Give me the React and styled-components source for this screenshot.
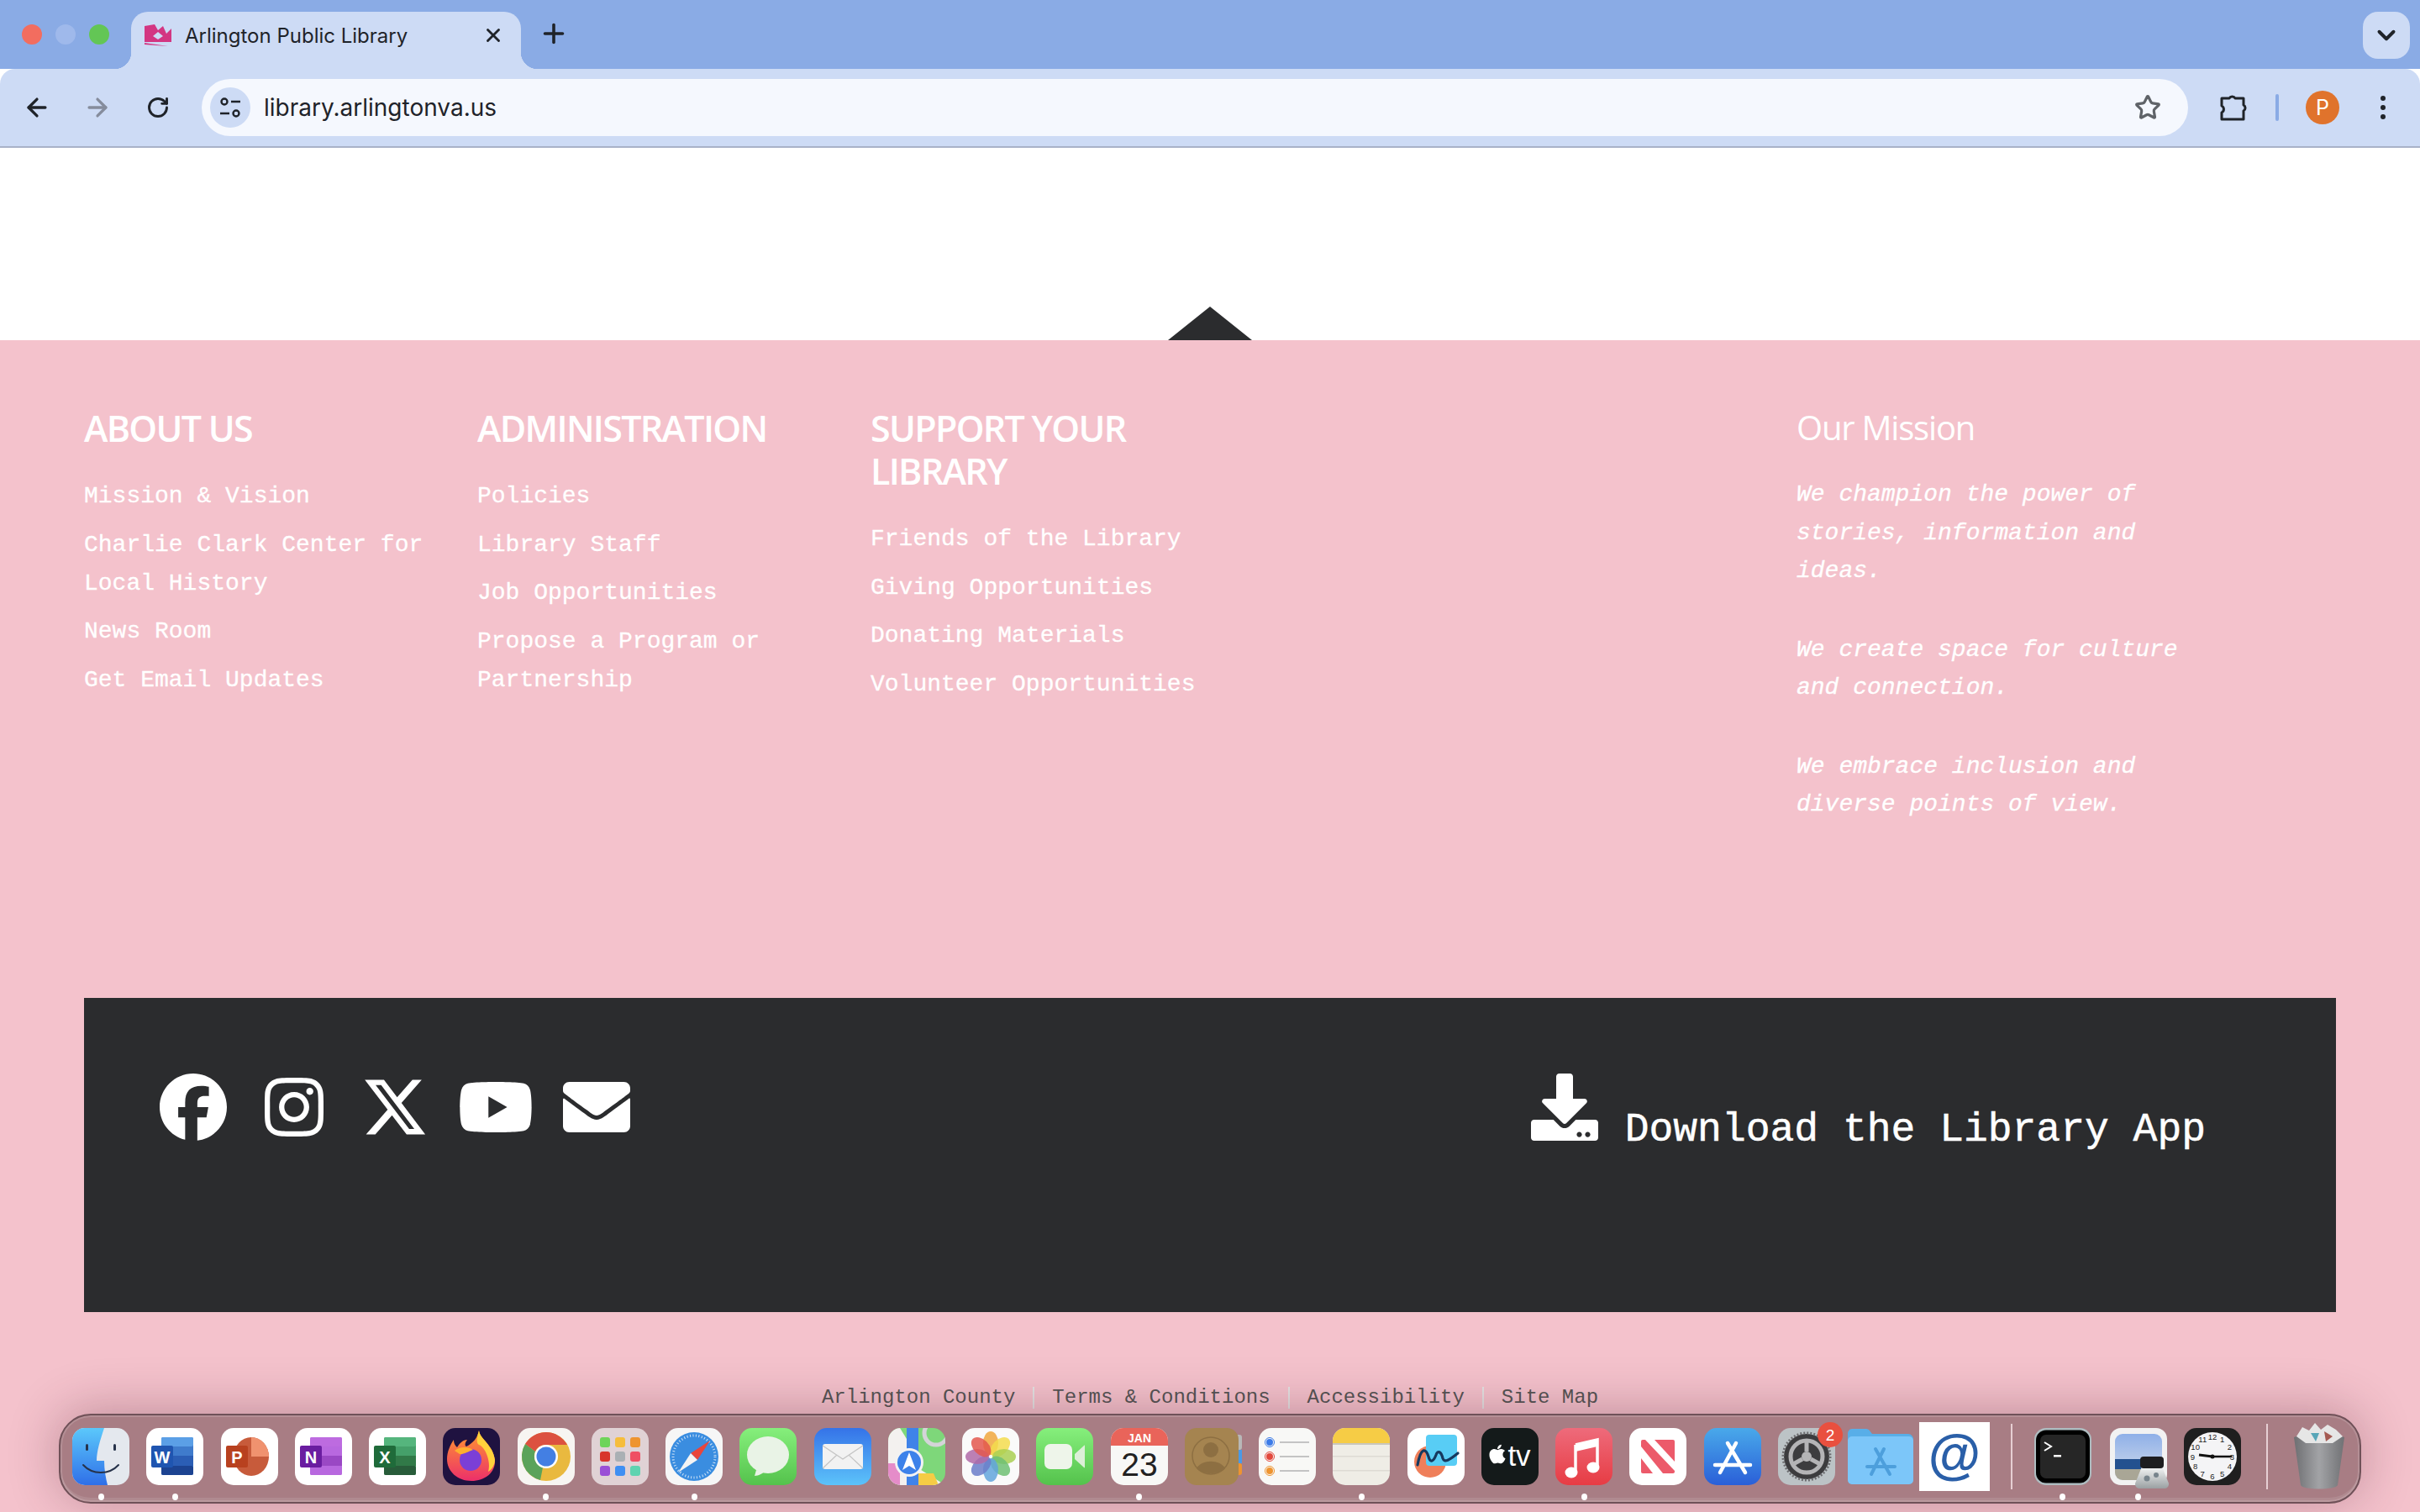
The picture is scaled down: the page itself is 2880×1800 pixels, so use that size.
import React from 'react'
import styled, { createGlobalStyle } from 'styled-components'
import { ArrowLeft, ArrowRight, RotateCw, X, Plus, ChevronDown, Star } from 'lucide-react'
import { FaFacebook, FaInstagram, FaXTwitter, FaYoutube, FaApple } from 'react-icons/fa6'
import { FaDownload, FaEnvelope } from 'react-icons/fa'

const GlobalStyle = createGlobalStyle`
  html, body { margin: 0; padding: 0; background: #fff; }
  * { box-sizing: border-box; }
`

const mono = `"Liberation Mono", "DejaVu Sans Mono", monospace`
const ui = `Inter, Roboto, "Liberation Sans", sans-serif`
const head = `"Open Sans", "Noto Sans", sans-serif`

const Page = styled.div`
  position: relative;
  width: 2880px;
  height: 1800px;
  overflow: hidden;
  background: #fff;
`

/* browser chrome */
const TabStrip = styled.div`
  display: flex;
  align-items: flex-end;
  height: 82px;
  background: #8aabe5;
  padding-left: 26px;
`
const Lights = styled.div`
  display: flex;
  gap: 16px;
  align-self: flex-start;
  margin-top: 29px;
  margin-right: 26px;
`
const Light = styled.span`
  width: 24px;
  height: 24px;
  border-radius: 50%;
  background: ${p => p.$color};
`
const Tab = styled.div`
  position: relative;
  display: flex;
  align-items: center;
  width: 464px;
  height: 68px;
  padding: 0 20px 12px 16px;
  background: #cddbf5;
  border-radius: 20px 20px 0 0;
  color: #1f2329;
  font: 400 24px ${ui};
  &::before, &::after {
    content: '';
    position: absolute;
    bottom: 0;
    width: 20px;
    height: 20px;
  }
  &::before {
    left: -20px;
    background: radial-gradient(circle at 0 0, transparent 20px, #cddbf5 20.5px);
  }
  &::after {
    right: -20px;
    background: radial-gradient(circle at 100% 0, transparent 20px, #cddbf5 20.5px);
  }
`
const TabTitle = styled.span`
  flex: 1;
  margin-left: 16px;
`
const NewTab = styled.div`
  display: flex;
  align-self: flex-start;
  margin: 22px 0 0 21px;
  color: #1f2329;
`
const TabMenu = styled.div`
  display: flex;
  align-items: center;
  justify-content: center;
  align-self: flex-start;
  width: 56px;
  height: 56px;
  margin: 14px 12px 0 auto;
  border-radius: 18px;
  background: #cddbf5;
  color: #1f2329;
`
const Toolbar = styled.div`
  display: flex;
  align-items: center;
  height: 94px;
  padding: 0 24px 0 8px;
  background: #cddbf5;
  border-radius: 18px 18px 0 0;
  border-bottom: 2px solid #a8b2c8;
`
const ToolSlot = styled.div`
  display: flex;
  align-items: center;
  justify-content: center;
  width: ${p => p.$w}px;
  padding-left: ${p => p.$nudge || 0}px;
  color: ${p => p.$color || '#1f2329'};
`
const AddressBar = styled.div`
  display: flex;
  align-items: center;
  flex: 1;
  height: 68px;
  margin-left: 16px;
  padding: 0 32px 0 10px;
  border-radius: 34px;
  background: #f5f8fe;
  color: #1f2329;
  font: 400 28px ${ui};
`
const SiteChip = styled.div`
  display: flex;
  align-items: center;
  justify-content: center;
  width: 48px;
  height: 48px;
  margin-right: 16px;
  border-radius: 50%;
  background: #cddbf5;
`
const Url = styled.span`
  flex: 1;
`
const BarDivider = styled.span`
  width: 4px;
  height: 32px;
  border-radius: 2px;
  background: #8aabe5;
`
const Avatar = styled.div`
  display: flex;
  align-items: center;
  justify-content: center;
  width: 40px;
  height: 40px;
  border-radius: 50%;
  background: #e0732c;
  color: #fff;
  font: 400 25px ${ui};
`
const Kebab = styled.div`
  display: flex;
  flex-direction: column;
  gap: 5px;
  span {
    width: 6px;
    height: 6px;
    border-radius: 50%;
    background: #1f2329;
  }
`

/* page */
const WhiteBand = styled.div`
  display: flex;
  align-items: flex-end;
  justify-content: center;
  height: 229px;
`
const Notch = styled.div`
  width: 0;
  height: 0;
  border-left: 50px solid transparent;
  border-right: 50px solid transparent;
  border-bottom: 40px solid #2b2c2e;
`
const Footer = styled.footer`
  height: 1395px;
  background: #f4c2cc;
  padding: 0 100px;
`
const Columns = styled.div`
  display: flex;
  height: 783px;
  padding-top: 79px;
`
const Column = styled.div`
  width: 468px;
  padding-right: 28px;
`
const Heading = styled.h3`
  margin: 0 0 33px;
  color: #fff;
  font: 600 43px/51px ${head};
  letter-spacing: -1.7px;
`
const LinkList = styled.ul`
  display: flex;
  flex-direction: column;
  gap: 11.5px;
  margin: 0;
  padding: 0;
  list-style: none;
`
const LinkItem = styled.li`
  color: #fff;
  font: 400 28px/46px ${mono};
  -webkit-text-stroke: 0.3px #fff;
`
const Mission = styled.div`
  width: 642px;
  margin-left: auto;
  padding-right: 140px;
`
const MissionTitle = styled.h3`
  margin: 0 0 33px;
  color: #fff;
  font: 400 40px/49px ${head};
  letter-spacing: -1.2px;
`
const MissionText = styled.p`
  margin: 0 0 48px;
  color: #fff;
  font: italic 400 28px/45.5px ${mono};
  -webkit-text-stroke: 0.3px #fff;
`
const Panel = styled.div`
  display: flex;
  justify-content: space-between;
  height: 374px;
  padding: 90px 155px 0 90px;
  background: #2b2c2e;
`
const Socials = styled.div`
  display: flex;
  align-items: flex-start;
  color: #fff;
`
const Social = styled.a`
  display: flex;
  margin-left: ${p => p.$gap || 0}px;
  svg {
    height: 80px;
    width: ${p => p.$w || 80}px;
  }
`
const AppLink = styled.a`
  display: flex;
  align-items: flex-end;
  align-self: flex-start;
  gap: 32px;
  color: #fff;
  font: 400 48px/1 ${mono};
  -webkit-text-stroke: 0.5px #fff;
  svg {
    width: 80px;
    height: 80px;
  }
`
const AppLabel = styled.span`
  position: relative;
  top: 11px;
`
const LegalRow = styled.div`
  display: flex;
  justify-content: center;
  margin-top: 89px;
`
const LegalLink = styled.a`
  padding: 0 21px;
  border-left: 2px solid #e4e4e4;
  color: #555;
  font: 400 24px/26px ${mono};
  &:first-child { padding-left: 0; border-left: 0; }
  &:last-child { padding-right: 0; }
`

/* dock */
const Dock = styled.div`
  position: absolute;
  left: 70px;
  top: 1683px;
  display: flex;
  align-items: center;
  width: 2740px;
  height: 107px;
  padding: 0 0 5px 14px;
  border: 2px solid #6f5158;
  border-radius: 38px;
  background: #a87d84;
  box-shadow: inset 0 -5px 0 rgba(255, 255, 255, 0.1), inset 0 0 0 2px rgba(255, 255, 255, 0.14),
    0 -4px 60px rgba(70, 20, 35, 0.3);
`
const Slot = styled.div`
  position: relative;
  flex: none;
  width: ${p => p.$w || 68}px;
  margin-left: ${p => p.$gap ?? 20.26}px;
  &:first-child { margin-left: 0; }
  ${p => p.$running && `
    &::after {
      content: '';
      position: absolute;
      left: 50%;
      bottom: -18px;
      width: 7px;
      height: 8px;
      margin-left: -3.5px;
      border-radius: 50%;
      background: #fff;
    }
  `}
`
const Tile = styled.svg`
  display: block;
  width: 100%;
  overflow: visible;
`
const DockRule = styled.div`
  flex: none;
  width: 2px;
  height: 78px;
  margin-left: ${p => p.$gap}px;
  background: #e6cfd3;
`

const Office = ({ light, mid, dark, deep, badge, letter, round }) => (
  <Tile viewBox="0 0 68 68">
    <rect width="68" height="68" rx="15" fill="#fff" />
    {round ? (
      <>
        <ellipse cx="36" cy="34" rx="21" ry="23" fill={mid} />
        <path d="M36 11a21 23 0 0 1 21 23H36z" fill={light} />
      </>
    ) : (
      <>
        <rect x="18" y="11" width="38" height="45" rx="2" fill={mid} />
        <rect x="18" y="11" width="38" height="11" rx="2" fill={light} />
        <rect x="18" y="33" width="38" height="12" fill={dark} />
        <rect x="18" y="45" width="38" height="11" rx="2" fill={deep} />
      </>
    )}
    <rect x="6" y="21" width="26" height="26" rx="2" fill={badge} />
    <text x="19" y="41.5" textAnchor="middle" fontFamily="Liberation Sans" fontWeight="700" fontSize="20" fill="#fff">{letter}</text>
  </Tile>
)

const Finder = () => (
  <Tile viewBox="0 0 68 68">
    <defs>
      <linearGradient id="fb" x1="0" y1="0" x2="0" y2="1"><stop offset="0" stopColor="#5bc8fb" /><stop offset="1" stopColor="#2f6fe8" /></linearGradient>
    </defs>
    <rect width="68" height="68" rx="15" fill="#e4e8ee" />
    <path d="M15 0H38C33 15 29 28 29 39H38C38 50 40 60 42 68H15A15 15 0 0 1 0 53V15A15 15 0 0 1 15 0Z" fill="url(#fb)" />
    <rect x="16" y="19" width="3" height="8" rx="1.5" fill="#26324a" />
    <rect x="49" y="19" width="3" height="8" rx="1.5" fill="#26324a" />
    <path d="M13 44C24 56 44 56 55 44" fill="none" stroke="#26324a" strokeWidth="2" strokeLinecap="round" />
  </Tile>
)

const Firefox = () => (
  <Tile viewBox="0 0 68 68">
    <defs>
      <linearGradient id="ff" x1="0" y1="0" x2="0" y2="1"><stop offset="0" stopColor="#ff9a2e" /><stop offset="1" stopColor="#ec2f6a" /></linearGradient>
    </defs>
    <rect width="68" height="68" rx="15" fill="#1f1240" />
    <path d="M43 3C44 13 60 20 62 38C63 53 50 63 34 63C18 63 5 52 5 37C5 28 9 20 13 14C13 19 15 21 17 23C20 18 24 14 29 14C26 18 26 21 28 22C36 18 41 12 43 3Z" fill="url(#ff)" />
    <path d="M43 3C44 13 60 20 62 38C62 44 58 50 54 52C58 40 50 22 43 20C39 18 41 10 43 3Z" fill="#ffd23c" />
    <circle cx="33" cy="38" r="13" fill="#7b3fd6" />
    <path d="M14 27C20 22 30 22 36 26C30 28 24 32 20 31Z" fill="#ffb02e" />
  </Tile>
)

const Chrome = () => (
  <Tile viewBox="0 0 68 68">
    <rect width="68" height="68" rx="15" fill="#f7f5f2" />
    <circle cx="34" cy="34" r="29" fill="#e9b93f" />
    <path d="M34 5A29 29 0 0 1 59 20H34A14 14 0 0 0 21 28L9 19A29 29 0 0 1 34 5Z" fill="#dc5140" />
    <path d="M9 19L21 28A14 14 0 0 0 30 47L27 62A29 29 0 0 1 9 19Z" fill="#5ba35a" />
    <circle cx="34" cy="34" r="14" fill="#fff" />
    <circle cx="34" cy="34" r="11.5" fill="#437fe3" />
  </Tile>
)

const Launchpad = () => {
  const colors = ['#6ed45a', '#f6bd3c', '#ee9430', '#d8352c', '#aab0b4', '#ef4f63', '#9a4fd6', '#3f8ff2', '#5fd3b0']
  return (
    <Tile viewBox="0 0 68 68">
      <rect width="68" height="68" rx="15" fill="#e0d2d5" />
      {colors.map((c, i) => (
        <rect key={c} x={10 + (i % 3) * 18} y={11 + Math.floor(i / 3) * 17} width="12" height="12" rx="3" fill={c} />
      ))}
    </Tile>
  )
}

const Safari = () => (
  <Tile viewBox="0 0 68 68">
    <rect width="68" height="68" rx="15" fill="#f6f6f6" />
    <circle cx="34" cy="34" r="29" fill="#3a8de0" />
    <circle cx="34" cy="34" r="25" fill="none" stroke="#cfe3f7" strokeWidth="3" strokeDasharray="1 2.5" />
    <path d="M53 15L30 30L38 38Z" fill="#e8453c" />
    <path d="M15 53L38 38L30 30Z" fill="#f4f4f4" />
  </Tile>
)

const Messages = () => (
  <Tile viewBox="0 0 68 68">
    <defs>
      <linearGradient id="gr" x1="0" y1="0" x2="0" y2="1"><stop offset="0" stopColor="#86ef7c" /><stop offset="1" stopColor="#54c24c" /></linearGradient>
    </defs>
    <rect width="68" height="68" rx="15" fill="url(#gr)" />
    <ellipse cx="34" cy="32" rx="25" ry="22" fill="#e9f3e6" />
    <path d="M20 50L18 57C23 57 27 54 30 52Z" fill="#e9f3e6" />
  </Tile>
)

const Mail = () => (
  <Tile viewBox="0 0 68 68">
    <defs>
      <linearGradient id="ml" x1="0" y1="0" x2="0" y2="1"><stop offset="0" stopColor="#3573e8" /><stop offset="1" stopColor="#5cc3fa" /></linearGradient>
    </defs>
    <rect width="68" height="68" rx="15" fill="url(#ml)" />
    <rect x="10" y="19" width="48" height="30" rx="3" fill="#f2f2f2" />
    <path d="M10 21L34 37L58 21M10 48L27 32M58 48L41 32" fill="none" stroke="#c4c4c4" strokeWidth="1.2" />
  </Tile>
)

const Maps = () => (
  <Tile viewBox="0 0 68 68">
    <clipPath id="mapc"><rect width="68" height="68" rx="15" /></clipPath>
    <g clipPath="url(#mapc)">
      <rect width="68" height="68" fill="#7ed77a" />
      <path d="M0 0H14L30 26V68H0Z" fill="#f3f1ef" />
      <rect x="0" y="42" width="14" height="26" fill="#e58cc9" />
      <rect x="22" y="0" width="14" height="68" fill="#3f83e8" />
      <path d="M36 48L68 68H36Z" fill="#f3f1ef" />
      <path d="M36 54H54L60 68H36Z" fill="#f6cc45" />
      <circle cx="57" cy="6" r="14" fill="none" stroke="#d4d4d8" strokeWidth="5" />
      <circle cx="25" cy="41" r="17" fill="#f2f2f2" />
      <circle cx="25" cy="41" r="14" fill="#3d82ea" />
      <path d="M25 29L33 50L25 45L17 50Z" fill="#fff" />
    </g>
  </Tile>
)

const Photos = () => {
  const petals = ['#f0a73e', '#f3dc4e', '#a9cf52', '#6fbf73', '#62a5dc', '#6a7cc9', '#b06aa8', '#e3574e']
  return (
    <Tile viewBox="0 0 68 68">
      <rect width="68" height="68" rx="15" fill="#fafafa" />
      {petals.map((c, i) => (
        <ellipse key={c} cx="34" cy="18" rx="9" ry="14" fill={c} opacity="0.85" transform={`rotate(${i * 45} 34 34)`} />
      ))}
    </Tile>
  )
}

const FaceTime = () => (
  <Tile viewBox="0 0 68 68">
    <defs>
      <linearGradient id="ft" x1="0" y1="0" x2="0" y2="1"><stop offset="0" stopColor="#86ef7c" /><stop offset="1" stopColor="#54c24c" /></linearGradient>
    </defs>
    <rect width="68" height="68" rx="15" fill="url(#ft)" />
    <rect x="10" y="19" width="33" height="30" rx="7" fill="#eef5ea" />
    <path d="M46 31L57 21C58 20 58 21 58 22V46C58 47 58 48 57 47L46 37Z" fill="#dcefd8" />
  </Tile>
)

const Calendar = () => (
  <Tile viewBox="0 0 68 68">
    <clipPath id="calc"><rect width="68" height="68" rx="15" /></clipPath>
    <g clipPath="url(#calc)">
      <rect width="68" height="68" fill="#f8f8f6" />
      <rect width="68" height="21" fill="#e9645a" />
    </g>
    <text x="34" y="17" textAnchor="middle" fontFamily="Liberation Sans" fontWeight="700" fontSize="14" fill="#fff">JAN</text>
    <text x="34" y="57" textAnchor="middle" fontFamily="Liberation Sans" fontSize="39" fill="#222">23</text>
  </Tile>
)

const Contacts = () => (
  <Tile viewBox="0 0 68 68">
    <rect x="58" y="8" width="10" height="18" rx="3" fill="#b8b8b8" />
    <rect x="58" y="26" width="10" height="16" fill="#4a9ae8" />
    <rect x="58" y="42" width="10" height="14" rx="3" fill="#ee9430" />
    <rect width="64" height="68" rx="14" fill="#a58450" />
    <circle cx="31" cy="33" r="22" fill="none" stroke="#8d6f42" strokeWidth="1.5" />
    <circle cx="31" cy="26" r="9" fill="#8d6f42" />
    <path d="M14 48C20 37 42 37 48 48C42 56 20 56 14 48Z" fill="#8d6f42" />
  </Tile>
)

const Reminders = () => (
  <Tile viewBox="0 0 68 68">
    <rect width="68" height="68" rx="15" fill="#f8f8f6" />
    {[['#3c7be8', 17], ['#e2483c', 34], ['#ee9430', 51]].map(([c, y]) => (
      <g key={c}>
        <circle cx="13" cy={y} r="5.5" fill="none" stroke={c} strokeWidth="1" />
        <circle cx="13" cy={y} r="4" fill={c} />
        <rect x="25" y={y - 1} width="35" height="2" fill="#c4c4c4" />
      </g>
    ))}
  </Tile>
)

const Notes = () => (
  <Tile viewBox="0 0 68 68">
    <clipPath id="notc"><rect width="68" height="68" rx="15" /></clipPath>
    <g clipPath="url(#notc)">
      <rect width="68" height="68" fill="#efede6" />
      <rect width="68" height="18" fill="#f6cc45" />
      <rect y="18" width="68" height="2" fill="#c9c6bc" />
      <rect y="33" width="68" height="1.5" fill="#dedbd3" />
      <rect y="50" width="68" height="1.5" fill="#dedbd3" />
    </g>
  </Tile>
)

const Freeform = () => (
  <Tile viewBox="0 0 68 68">
    <rect width="68" height="68" rx="15" fill="#fff" />
    <ellipse cx="27" cy="40" rx="19" ry="19" fill="#ef7f5a" />
    <rect x="22" y="8" width="37" height="37" rx="4" fill="#58cdf5" />
    <path d="M12 44C16 22 22 24 25 34C27 42 31 40 34 32C36 26 40 28 42 36C44 42 50 38 60 30" fill="none" stroke="#16395f" strokeWidth="3.2" strokeLinecap="round" />
  </Tile>
)

const AppleTv = () => (
  <Tile viewBox="0 0 68 68">
    <rect width="68" height="68" rx="15" fill="#141a1a" />
    <FaApple x="6" y="18" size={26} color="#fff" />
    <text x="45" y="45" textAnchor="middle" fontFamily="Liberation Sans" fontSize="35" fill="#fff">tv</text>
  </Tile>
)

const Music = () => (
  <Tile viewBox="0 0 68 68">
    <defs>
      <linearGradient id="mu" x1="0" y1="0" x2="0" y2="1"><stop offset="0" stopColor="#ee6b7b" /><stop offset="1" stopColor="#e73c44" /></linearGradient>
    </defs>
    <rect width="68" height="68" rx="15" fill="url(#mu)" />
    <path d="M24 20L50 14V47" fill="none" stroke="#fff" strokeWidth="3.5" />
    <path d="M24 20V54" fill="none" stroke="#fff" strokeWidth="3.5" />
    <path d="M24 19L50 13V22L24 28Z" fill="#fff" />
    <ellipse cx="19" cy="53" rx="7.5" ry="6.5" fill="#fff" />
    <ellipse cx="45" cy="47" rx="7.5" ry="6.5" fill="#fff" />
  </Tile>
)

const News = () => (
  <Tile viewBox="0 0 68 68">
    <rect width="68" height="68" rx="15" fill="#fff" />
    <rect x="14" y="14" width="40" height="40" rx="2" fill="#ec5a6a" />
    <path d="M19 14H30L54 40V51Z" fill="#fff" />
    <path d="M14 22L40 54H28L14 36Z" fill="#fff" />
  </Tile>
)

const AppStore = () => (
  <Tile viewBox="0 0 68 68">
    <defs>
      <linearGradient id="as" x1="0" y1="0" x2="0" y2="1"><stop offset="0" stopColor="#49a9ea" /><stop offset="1" stopColor="#2a5fd8" /></linearGradient>
    </defs>
    <rect width="68" height="68" rx="15" fill="url(#as)" />
    <path d="M28 18L49 53M38 18L19 53M13 44H55" fill="none" stroke="#fff" strokeWidth="4.5" strokeLinecap="round" />
  </Tile>
)

const Settings = () => (
  <Tile viewBox="0 0 68 68">
    <rect width="68" height="68" rx="15" fill="#bcc3c6" />
    <circle cx="34" cy="34" r="27" fill="#3c3c3e" />
    <circle cx="34" cy="34" r="28" fill="none" stroke="#6d6d70" strokeWidth="3" strokeDasharray="2 2" />
    <circle cx="34" cy="34" r="19" fill="none" stroke="#b4b4b6" strokeWidth="5" />
    <circle cx="34" cy="34" r="6" fill="#b4b4b6" />
    <path d="M34 15V28M18 43L29 37M50 43L39 37" stroke="#b4b4b6" strokeWidth="5" />
    <circle cx="62" cy="8" r="15" fill="#e9503f" />
    <text x="62" y="14.5" textAnchor="middle" fontFamily="Liberation Sans" fontSize="19" fill="#fff">2</text>
  </Tile>
)

const Folder = () => (
  <Tile viewBox="0 0 78 66">
    <path d="M0 6C0 3 2 0 5 0H22C25 0 26 2 29 6H72C75 6 78 9 78 12V60C78 63 75 66 72 66H6C3 66 0 63 0 60Z" fill="#58aee8" />
    <rect x="0" y="9" width="78" height="57" rx="5" fill="#7cc6f9" />
    <path d="M33 24L50 54M43 24L28 54M23 45H56" fill="none" stroke="#4d9fdc" strokeWidth="4" strokeLinecap="round" />
  </Tile>
)

const AtSign = () => (
  <Tile viewBox="0 0 84 82">
    <rect width="84" height="82" fill="#fff" />
    <text x="42" y="60" textAnchor="middle" fontFamily="Liberation Sans" fontWeight="700" fontSize="64" fill="#2a5fa8">@</text>
  </Tile>
)

const Terminal = () => (
  <Tile viewBox="0 0 68 68">
    <rect width="68" height="68" rx="14" fill="#aebcc0" />
    <rect x="2" y="2.5" width="64" height="63" rx="12" fill="#000" />
    <rect x="7" y="8" width="54" height="52" rx="7" fill="#262626" />
    <path d="M12 17L20 22L12 27" fill="none" stroke="#fff" strokeWidth="2" />
    <rect x="23" y="32" width="9" height="2.5" fill="#fff" />
  </Tile>
)

const Preview = () => (
  <Tile viewBox="0 0 68 68">
    <defs>
      <linearGradient id="sky" x1="0" y1="0" x2="0" y2="1"><stop offset="0" stopColor="#8fb0e8" /><stop offset="1" stopColor="#d5deec" /></linearGradient>
      <linearGradient id="gls" x1="0" y1="0" x2="0" y2="1"><stop offset="0" stopColor="#f4f6f6" /><stop offset="1" stopColor="#9aa0a2" /></linearGradient>
    </defs>
    <clipPath id="prc"><rect x="6" y="7" width="56" height="55" rx="9" /></clipPath>
    <rect width="68" height="68" rx="13" fill="#f2f2f2" />
    <g clipPath="url(#prc)">
      <rect x="6" y="7" width="56" height="55" fill="url(#sky)" />
      <rect x="6" y="37" width="56" height="12" fill="#24518f" />
      <rect x="6" y="49" width="56" height="13" fill="#a9a696" />
    </g>
    <path d="M38 46H62L70 66C70 70 68 72 64 72H36C32 72 30 70 30 66Z" fill="url(#gls)" />
    <rect x="36" y="34" width="28" height="14" rx="4" fill="#1d1d1f" />
    <circle cx="44" cy="60" r="3.5" fill="#77848c" />
    <circle cx="55" cy="56" r="3" fill="#77848c" />
  </Tile>
)

const Clock = () => (
  <Tile viewBox="0 0 68 68">
    <rect width="68" height="68" rx="15" fill="#1f1f1f" />
    <circle cx="34" cy="34" r="29" fill="#f4f4f6" />
    {Array.from({ length: 12 }, (_, i) => {
      const a = ((i + 1) * Math.PI) / 6
      return (
        <text key={i} x={34 + 23.5 * Math.sin(a)} y={37.5 - 23.5 * Math.cos(a)} textAnchor="middle" fontFamily="Liberation Sans" fontSize="9.5" fill="#222">{i + 1}</text>
      )
    })}
    <path d="M34 34L57 34" stroke="#111" strokeWidth="2.5" />
    <path d="M34 34L18 32" stroke="#111" strokeWidth="3" />
    <circle cx="34" cy="34" r="2.5" fill="#111" />
  </Tile>
)

const Trash = () => (
  <Tile viewBox="0 0 60 80">
    <defs>
      <linearGradient id="tr" x1="0" y1="0" x2="1" y2="0"><stop offset="0" stopColor="#6e6f72" /><stop offset="0.5" stopColor="#a2a3a6" /><stop offset="1" stopColor="#707174" /></linearGradient>
    </defs>
    <path d="M0 17C15 12 45 12 60 17L52 74C50 80 10 80 8 74Z" fill="url(#tr)" />
    <path d="M3 16L10 5L18 9L25 0L32 8L40 2L50 8L58 16L46 24L14 24Z" fill="#e6e6e6" />
    <path d="M20 12L30 12L26 22Z" fill="#58a6b8" />
    <path d="M36 10L46 16L38 22Z" fill="#a45a52" />
  </Tile>
)

const apps = [
  { id: 'finder', El: Finder, running: true },
  { id: 'word', El: () => <Office light="#5b9fe6" mid="#3f7bcc" dark="#2b5eb5" deep="#1c4391" badge="#1f55b0" letter="W" />, running: true },
  { id: 'ppt', El: () => <Office round light="#f0926f" mid="#c75b3b" badge="#b8411f" letter="P" /> },
  { id: 'onenote', El: () => <Office light="#bd6be0" mid="#b868df" dark="#9a48c4" deep="#b868df" badge="#6a1da0" letter="N" /> },
  { id: 'excel', El: () => <Office light="#55b57d" mid="#45a06a" dark="#317948" deep="#285c3a" badge="#1f6b3a" letter="X" /> },
  { id: 'firefox', El: Firefox },
  { id: 'chrome', El: Chrome, running: true },
  { id: 'launchpad', El: Launchpad },
  { id: 'safari', El: Safari, running: true },
  { id: 'messages', El: Messages },
  { id: 'mail', El: Mail },
  { id: 'maps', El: Maps },
  { id: 'photos', El: Photos },
  { id: 'facetime', El: FaceTime },
  { id: 'calendar', El: Calendar, running: true },
  { id: 'contacts', El: Contacts },
  { id: 'reminders', El: Reminders },
  { id: 'notes', El: Notes, running: true },
  { id: 'freeform', El: Freeform },
  { id: 'tv', El: AppleTv },
  { id: 'music', El: Music, running: true },
  { id: 'news', El: News },
  { id: 'appstore', El: AppStore },
  { id: 'settings', El: Settings },
  { id: 'folder', El: Folder, w: 78, gap: 15 },
  { id: 'at', El: AtSign, w: 84, gap: 7 },
  { rule: true, id: 'r1', gap: 25 },
  { id: 'terminal', El: Terminal, running: true, gap: 26 },
  { id: 'preview', El: Preview, running: true, gap: 22 },
  { id: 'clock', El: Clock, gap: 20 },
  { rule: true, id: 'r2', gap: 30 },
  { id: 'trash', El: Trash, w: 60, gap: 31 },
]

const columns = [
  { title: 'ABOUT US', links: ['Mission & Vision', 'Charlie Clark Center for Local History', 'News Room', 'Get Email Updates'] },
  { title: 'ADMINISTRATION', links: ['Policies', 'Library Staff', 'Job Opportunities', 'Propose a Program or Partnership'] },
  { title: 'SUPPORT YOUR LIBRARY', links: ['Friends of the Library', 'Giving Opportunities', 'Donating Materials', 'Volunteer Opportunities'] },
]

const App = () => (
  <Page>
    <GlobalStyle />
    <TabStrip>
      <Lights>
        <Light $color="#f26d5f" />
        <Light $color="#9fb9eb" />
        <Light $color="#63c655" />
      </Lights>
      <Tab>
        <svg width="32" height="28" viewBox="0 0 32 28">
          <path d="M0 3L12 1L16 8L22 3L26 12L32 6V22H0Z" fill="#d33682" />
          <path d="M0 23L28 27L0 25Z" fill="#d33682" />
          <path d="M10 15L16 10L22 15L16 19Z" fill="#cddbf5" />
        </svg>
        <TabTitle>Arlington Public Library</TabTitle>
        <X size={26} strokeWidth={2.6} />
      </Tab>
      <NewTab><Plus size={36} strokeWidth={2.4} /></NewTab>
      <TabMenu><ChevronDown size={34} strokeWidth={2.8} /></TabMenu>
    </TabStrip>
    <Toolbar>
      <ToolSlot $w={72}><ArrowLeft size={34} strokeWidth={2.3} /></ToolSlot>
      <ToolSlot $w={72} $color="#858c9c"><ArrowRight size={34} strokeWidth={2.3} /></ToolSlot>
      <ToolSlot $w={72}><RotateCw size={28} strokeWidth={2.5} /></ToolSlot>
      <AddressBar>
        <SiteChip>
          <svg width="26" height="26" viewBox="0 0 26 26" fill="none" stroke="#1f2329" strokeWidth="2.4">
            <circle cx="6" cy="6" r="3.5" />
            <path d="M14 6H25M1 20H12" />
            <circle cx="20" cy="20" r="3.5" />
          </svg>
        </SiteChip>
        <Url>library.arlingtonva.us</Url>
        <Star size={32} strokeWidth={2.4} color="#5f6368" />
      </AddressBar>
      <ToolSlot $w={104} $nudge={5}>
        <svg width="36" height="34" viewBox="0 0 36 34" fill="none" stroke="#1f2329" strokeWidth="3" strokeLinejoin="round">
          <path d="M3 6H12A4 4 0 0 1 19 6H29V14A4 4 0 0 1 29 21V31H3V23A4.500 4.500 0 0 0 3 15Z" />
        </svg>
      </ToolSlot>
      <BarDivider />
      <ToolSlot $w={104}><Avatar>P</Avatar></ToolSlot>
      <ToolSlot $w={40}><Kebab><span /><span /><span /></Kebab></ToolSlot>
    </Toolbar>
    <WhiteBand><Notch /></WhiteBand>
    <Footer>
      <Columns>
        {columns.map(col => (
          <Column key={col.title}>
            <Heading>{col.title}</Heading>
            <LinkList>
              {col.links.map(l => <LinkItem key={l}>{l}</LinkItem>)}
            </LinkList>
          </Column>
        ))}
        <Mission>
          <MissionTitle>Our Mission</MissionTitle>
          <MissionText>We champion the power of stories, information and ideas.</MissionText>
          <MissionText>We create space for culture and connection.</MissionText>
          <MissionText>We embrace inclusion and diverse points of view.</MissionText>
        </Mission>
      </Columns>
      <Panel>
        <Socials>
          <Social><FaFacebook /></Social>
          <Social $gap={45} $w={70}><FaInstagram /></Social>
          <Social $gap={45}><FaXTwitter /></Social>
          <Social $gap={35} $w={90}><FaYoutube /></Social>
          <Social $gap={35}><FaEnvelope /></Social>
        </Socials>
        <AppLink>
          <FaDownload />
          <AppLabel>Download the Library App</AppLabel>
        </AppLink>
      </Panel>
      <LegalRow>
        <LegalLink>Arlington County</LegalLink>
        <LegalLink>Terms &amp; Conditions</LegalLink>
        <LegalLink>Accessibility</LegalLink>
        <LegalLink>Site Map</LegalLink>
      </LegalRow>
    </Footer>
    <Dock>
      {apps.map(a => a.rule
        ? <DockRule key={a.id} $gap={a.gap} />
        : <Slot key={a.id} $w={a.w} $gap={a.gap} $running={a.running}><a.El /></Slot>)}
    </Dock>
  </Page>
)

export default App
